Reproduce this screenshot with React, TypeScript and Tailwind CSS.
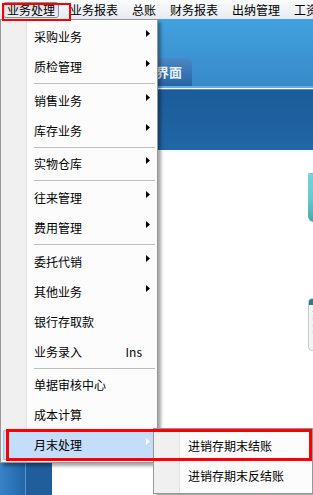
import React from "react";

type Row =
  | { kind: "item"; label: string; arrow?: boolean; shortcut?: string; active?: boolean }
  | { kind: "sep"; thin?: boolean };

const mainRows: Row[] = [
  { kind: "item", label: "采购业务", arrow: true },
  { kind: "item", label: "质检管理", arrow: true },
  { kind: "sep" },
  { kind: "item", label: "销售业务", arrow: true },
  { kind: "item", label: "库存业务", arrow: true },
  { kind: "sep", thin: true },
  { kind: "item", label: "实物仓库", arrow: true },
  { kind: "sep" },
  { kind: "item", label: "往来管理", arrow: true },
  { kind: "item", label: "费用管理", arrow: true },
  { kind: "sep" },
  { kind: "item", label: "委托代销", arrow: true },
  { kind: "item", label: "其他业务", arrow: true },
  { kind: "item", label: "银行存取款" },
  { kind: "item", label: "业务录入", shortcut: "Ins" },
  { kind: "sep", thin: true },
  { kind: "item", label: "单据审核中心" },
  { kind: "item", label: "成本计算" },
  { kind: "item", label: "月末处理", arrow: true, active: true },
];

const topMenus = ["业务报表", "总账", "财务报表", "出纳管理", "工资"];

function Arrow({ white }: { white?: boolean }) {
  return (
    <svg width="4" height="7" viewBox="0 0 4 7" className="mb-[7px] shrink-0">
      <path d="M0 0L4 3.5L0 7Z" fill={white ? "#ffffff" : "#000000"} />
    </svg>
  );
}

function MenuRow({ row }: { row: Row }) {
  if (row.kind === "sep") {
    return (
      <div className={row.thin ? "h-[3px] pt-px pl-[31px]" : "h-[4px] pt-px pl-[31px]"}>
        <div className="h-px bg-[#bdbdbd]" />
      </div>
    );
  }
  return (
    <div
      className={
        row.active
          ? "h-[30px] flex items-center pl-[31px] pr-[5px] rounded-[2px] bg-[#c4ddf8] shadow-[inset_0_0_0_1px_#98c0ea]"
          : "h-[30px] flex items-center pl-[31px] pr-[5px]"
      }
    >
      <span>{row.label}</span>
      {row.shortcut && <span className="ml-auto mr-[8px]">{row.shortcut}</span>}
      {row.arrow && (
        <span className="ml-auto flex items-center">
          <Arrow white={row.active} />
        </span>
      )}
    </div>
  );
}

export default function App() {
  return (
    <div className="relative w-[313px] h-[495px] overflow-hidden bg-white text-[12px] text-black font-['Noto_Sans_CJK_SC',sans-serif]">
      {/* window content behind the menu */}
      <div className="flex flex-col h-full">
        <div className="h-[19px] shrink-0 flex items-center pl-[7px] gap-[14px] bg-gradient-to-b from-[#fbfcfd] to-[#e6eaef] whitespace-nowrap">
          <span className="-ml-[4px] mr-[-3px] h-[16px] flex items-center px-[3px] rounded-[3px] border border-[#8d9196] bg-gradient-to-b from-[#dde1e6] to-[#eceff2] shadow-[inset_1px_1px_1px_rgba(0,0,0,0.12)]">
            业务处理
          </span>
          {topMenus.map((m) => (
            <span key={m}>{m}</span>
          ))}
        </div>

        <div className="h-[131px] shrink-0 flex flex-col">
          <div className="h-[67px] flex items-end bg-gradient-to-b from-[#42a2de] to-[#3889c8]">
            <div className="ml-[110px] w-[82px] h-[28px] flex items-center justify-end pr-[10px] rounded-tr-[5px] bg-gradient-to-b from-[#4b88c4] to-[#2564a6] text-[13px] font-bold text-[#eaf2fb]">
              主界面
            </div>
          </div>
          <div className="h-[2px] bg-[#67ade2]" />
          <div className="h-px bg-white" />
          <div className="h-px bg-[#4a8dcb]" />
          <div className="flex-1 bg-gradient-to-b from-[#1c5b99] to-[#2166a6]" />
        </div>

        <div className="flex flex-1 min-h-0">
          <div className="w-[52px] flex bg-[#1f5d9b]">
            <div className="w-[25px] bg-gradient-to-r from-[#3a83c7] to-[#2265a8]" />
            <div className="w-px bg-[#5b94cc]" />
          </div>
          <div className="flex-1 flex justify-end bg-white">
            <div className="w-[5px] overflow-hidden pt-[23px] flex flex-col">
              <div className="w-[40px] h-[49px] shrink-0 rounded-bl-[6px] rounded-tl-[2px] bg-gradient-to-b from-[#74d1de] via-[#6bc8d5] to-[#47a7af]" />
              <div className="mt-[76px] w-[40px] h-[53px] shrink-0 rounded-l-[4px] border border-[#c3cacd] bg-[#f3f5f5] overflow-hidden flex flex-col gap-[6px]">
                <div className="h-[6px] bg-gradient-to-r from-[#277d86] to-[#56a040]" />
                <div className="h-px bg-[#d0d5d8] mx-[3px]" />
                <div className="h-px bg-[#d0d5d8] mx-[3px]" />
                <div className="h-px bg-[#d0d5d8] mx-[3px]" />
                <div className="h-px bg-[#d0d5d8] mx-[3px]" />
              </div>
            </div>
          </div>
        </div>
      </div>

      {/* dropdown menu */}
      <div className="absolute left-0 top-[19px] w-[158px] p-[2px] border border-[#979797] bg-[linear-gradient(to_right,#f0f0f0_25px,#e2e3e3_25px,#e2e3e3_26px,#fcfcfc_26px)] shadow-[3px_3px_3px_rgba(0,0,0,0.35)] whitespace-nowrap">
        {mainRows.map((r, i) => (
          <MenuRow key={i} row={r} />
        ))}
      </div>

      {/* submenu */}
      <div className="absolute left-[153px] top-[428px] w-[160px] p-[2px] border border-[#979797] bg-[linear-gradient(to_right,#f0f0f0_25px,#e2e3e3_25px,#e2e3e3_26px,#fcfcfc_26px)] shadow-[3px_3px_3px_rgba(0,0,0,0.35)] whitespace-nowrap">
        <div className="h-[30px] flex items-center pl-[32px]">进销存期末结账</div>
        <div className="h-[30px] flex items-center pl-[32px]">进销存期末反结账</div>
      </div>

      {/* red annotation boxes */}
      <div className="absolute left-[2px] top-[3px] w-[69px] h-[18px] border-2 border-[#ff0000]" />
      <div className="absolute left-[6px] top-[429px] w-[306px] h-[32px] border-[3px] border-[#ff0000]" />
    </div>
  );
}
